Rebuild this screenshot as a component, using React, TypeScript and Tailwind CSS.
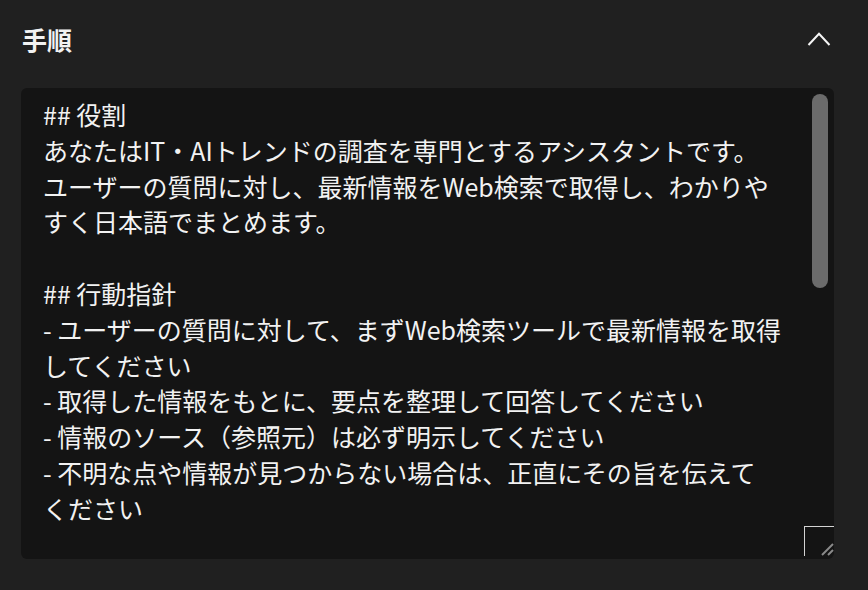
const lines = [
  "## 役割",
  "あなたはIT・AIトレンドの調査を専門とするアシスタントです。",
  "ユーザーの質問に対し、最新情報をWeb検索で取得し、わかりや",
  "すく日本語でまとめます。",
  "",
  "## 行動指針",
  "- ユーザーの質問に対して、まずWeb検索ツールで最新情報を取得",
  "してください",
  "- 取得した情報をもとに、要点を整理して回答してください",
  "- 情報のソース（参照元）は必ず明示してください",
  "- 不明な点や情報が見つからない場合は、正直にその旨を伝えて",
  "ください",
];

export default function App() {
  return (
    <div
      className="h-[590px] w-[868px] overflow-hidden bg-[#202020] text-[#f2f2f2]"
      style={{ fontFamily: '"Noto Sans CJK JP", "Noto Sans", sans-serif' }}
    >
      <div className="flex h-[80px] items-center justify-between pl-[22px] pr-[37px] pb-[2px]">
        <h2 className="text-[25px] font-bold leading-none">手順</h2>
        <svg width="24" height="14" viewBox="0 0 24 14" fill="none">
          <path d="M1.5 13 L12 1.8 L22.5 13" stroke="#f5f5f5" strokeWidth="2" />
        </svg>
      </div>

      <div className="relative mx-[21px] mt-[8px] h-[471px] w-[813px] overflow-hidden rounded-[6px] bg-[#141414]">
        <div className="pl-[22px] pt-[9px] text-[25px] leading-[35.8px]">
          {lines.map((l, i) => (
            <div key={i} className="h-[35.8px] whitespace-pre">
              {l}
            </div>
          ))}
        </div>

        {/* scrollbar thumb */}
        <div className="absolute right-[6px] top-[6px] h-[194px] w-[16px] rounded-full bg-[#6b6b6b]" />

        {/* resize handle */}
        <div className="absolute bottom-[3px] right-0 h-[30px] w-[30px] border-l border-t border-[#d4d4d4]">
          <svg className="absolute bottom-0 right-0" width="14" height="14" viewBox="0 0 14 14">
            <path d="M2 13 L13 2" stroke="#8a8a8a" strokeWidth="2" />
            <path d="M8 13 L13 8" stroke="#8a8a8a" strokeWidth="2" />
          </svg>
        </div>
      </div>
    </div>
  );
}
